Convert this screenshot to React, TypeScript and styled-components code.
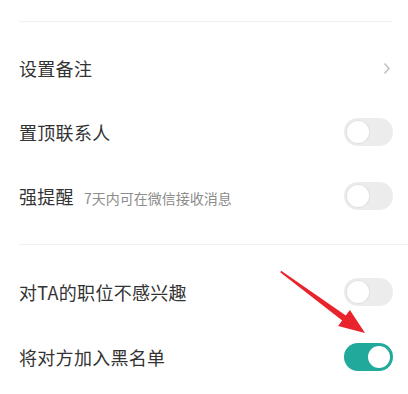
import styled, { createGlobalStyle } from "styled-components";

const GlobalStyle = createGlobalStyle`
  html, body {
    margin: 0;
    padding: 0;
    background: #ffffff;
  }
  body {
    font-family: "Noto Sans CJK SC", "Noto Sans", sans-serif;
  }
`;

interface SettingRow {
  label: string;
  hint?: string;
  kind: "link" | "switch";
  on?: boolean;
}

const groupA: SettingRow[] = [
  { label: "设置备注", kind: "link" },
  { label: "置顶联系人", kind: "switch", on: false },
  { label: "强提醒", hint: "7天内可在微信接收消息", kind: "switch", on: false },
];

const groupB: SettingRow[] = [
  { label: "对TA的职位不感兴趣", kind: "switch", on: false },
  { label: "将对方加入黑名单", kind: "switch", on: true },
];

const Chevron = () => (
  <svg width="8" height="13" viewBox="0 0 8 13">
    <path d="M1.5 1.5 L6 6.5 L1.5 11.5" fill="none" stroke="#bdbdbd" strokeWidth="1.4" />
  </svg>
);

const Row = ({ row, h }: { row: SettingRow; h: number }) => (
  <RowBox $h={h}>
    <LabelWrap>
      <Label>{row.label}</Label>
      {row.hint && <Hint>{row.hint}</Hint>}
    </LabelWrap>
    {row.kind === "link" ? (
      <ChevronWrap>
        <Chevron />
      </ChevronWrap>
    ) : (
      <Switch $on={!!row.on}>
        <Knob $on={!!row.on} />
      </Switch>
    )}
  </RowBox>
);

const App = () => (
  <Page>
    <GlobalStyle />
    <Divider $top={21} $right={16} />
    <Group $top={14}>
      {groupA.map((r) => (
        <Row key={r.label} row={r} h={64} />
      ))}
    </Group>
    <Divider $top={16} $right={0} />
    <Group $top={14}>
      {groupB.map((r) => (
        <Row key={r.label} row={r} h={65} />
      ))}
    </Group>
    {/* red annotation arrow pointing at the blacklist switch */}
    <Arrow width="100" height="75" viewBox="0 0 100 75">
      <path
        d="M0.2 1.2 L1.2 -0.2 L65.8 44.6 L69.9 38.9 L85 62 L58.1 55.1 L62.2 49.4 Z"
        fill="#e8232b"
      />
    </Arrow>
  </Page>
);

export default App;

// ── Styles ──────────────────────────────────────────────────────────

const Page = styled.div`
  position: relative;
  width: 408px;
  height: 394px;
  background: #fff;
  overflow: hidden;
`;

const Divider = styled.div<{ $top: number; $right: number }>`
  margin: ${(p) => p.$top}px ${(p) => p.$right}px 0 19px;
  height: 1px;
  background: #f0f0f0;
`;

const Group = styled.div<{ $top: number }>`
  margin-top: ${(p) => p.$top}px;
  display: flex;
  flex-direction: column;
`;

const RowBox = styled.div<{ $h: number }>`
  height: ${(p) => p.$h}px;
  padding: 0 15px 0 19px;
  display: flex;
  align-items: center;
  justify-content: space-between;
`;

const LabelWrap = styled.div`
  display: flex;
  align-items: baseline;
  gap: 10px;
`;

const Label = styled.span`
  font-size: 18px;
  color: #333333;
  letter-spacing: 0.3px;
`;

const Hint = styled.span`
  font-size: 14px;
  color: #8c8c8c;
`;

const ChevronWrap = styled.span`
  display: flex;
  margin-right: 2px;
`;

const Switch = styled.span<{ $on: boolean }>`
  width: 49px;
  height: 28px;
  border-radius: 14px;
  box-sizing: border-box;
  padding: 3px;
  display: flex;
  justify-content: ${(p) => (p.$on ? "flex-end" : "flex-start")};
  align-items: center;
  background: ${(p) => (p.$on ? "#21a99b" : "#ececec")};
`;

const Knob = styled.span<{ $on: boolean }>`
  width: 22px;
  height: 22px;
  border-radius: 50%;
  background: #fff;
  box-shadow: ${(p) => (p.$on ? "none" : "0 0 0 1px #e2e2e2")};
`;

const Arrow = styled.svg`
  position: absolute;
  left: 280px;
  top: 271px;
  overflow: visible;
`;
